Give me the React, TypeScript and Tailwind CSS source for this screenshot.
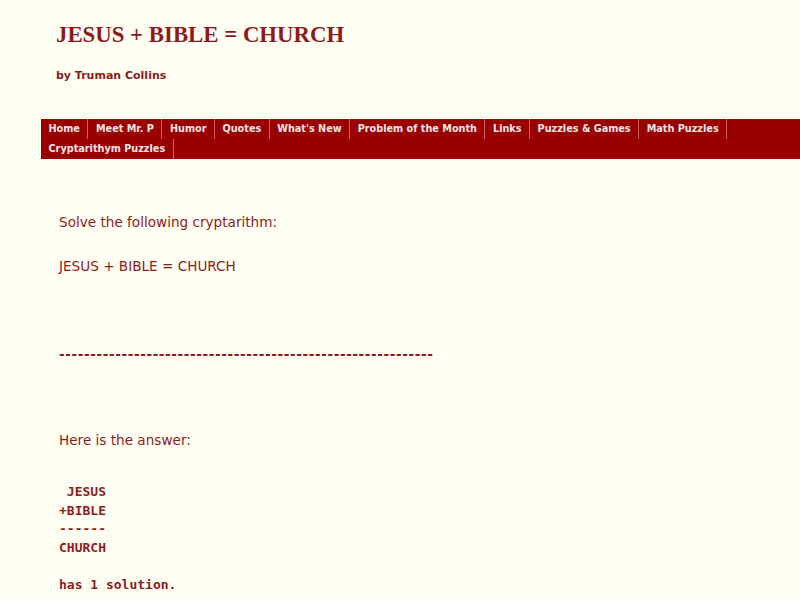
const navItems = [
  "Home",
  "Meet Mr. P",
  "Humor",
  "Quotes",
  "What's New",
  "Problem of the Month",
  "Links",
  "Puzzles & Games",
  "Math Puzzles",
  "Cryptarithym Puzzles",
];

export default function App() {
  return (
    <div className="min-h-[600px] bg-[#fffff3] text-[#8c1c1c] pt-[22px]">
      {/* site header */}
      <h1 className="ml-[56px] font-['Liberation_Serif',serif] text-[22.8px] font-bold leading-[26px]">
        JESUS + BIBLE = CHURCH
      </h1>
      <p className="ml-[56px] mt-[20px] font-['DejaVu_Sans',sans-serif] text-[11px] font-bold leading-[16px]">
        by Truman Collins
      </p>

      {/* menu bar */}
      <nav className="ml-[41px] mt-[35px] flex flex-wrap bg-[#990000] font-['DejaVu_Sans',sans-serif] text-[9.7px] font-bold text-[#f6e6e6]">
        {navItems.map((item) => (
          <a
            key={item}
            href="#"
            className="h-[20px] px-[7.5px] leading-[20px] border-r border-[#c86464]"
          >
            {item}
          </a>
        ))}
      </nav>

      {/* puzzle */}
      <div className="ml-[59px] mt-[54px] font-['DejaVu_Sans',sans-serif] text-[13.6px]">
        <p className="leading-[18px]">Solve the following cryptarithm:</p>
        <p className="mt-[26px] leading-[18px]">JESUS + BIBLE = CHURCH</p>
        <p className="mt-[70px] leading-[18px] font-bold tracking-[0.6px]">
          ------------------------------------------------------------
        </p>
        <p className="mt-[68px] leading-[18px]">Here is the answer:</p>
        <pre className="mt-[34px] font-['DejaVu_Sans_Mono',monospace] text-[13px] font-bold leading-[18.6px]">
{` JESUS
+BIBLE
------
CHURCH

has 1 solution.`}
        </pre>
      </div>
    </div>
  );
}
